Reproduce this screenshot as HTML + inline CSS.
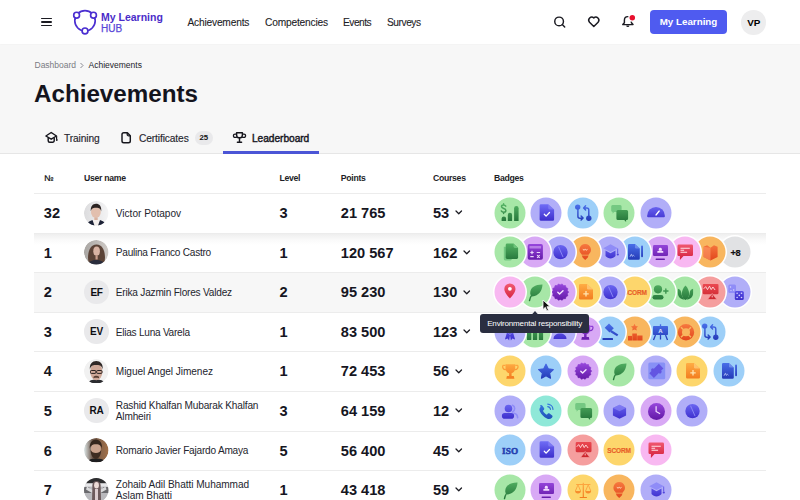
<!DOCTYPE html>
<html><head><meta charset="utf-8">
<style>
*{margin:0;padding:0;box-sizing:border-box}
html,body{width:800px;height:500px;overflow:hidden;background:#fff;font-family:"Liberation Sans",sans-serif;color:#1a1b25}
.a{position:absolute;white-space:nowrap}
#hdr{position:absolute;left:0;top:0;width:800px;height:44px;background:#fff;box-shadow:0 0.5px 1.5px rgba(0,0,0,0.04);z-index:5}
#gray{position:absolute;left:0;top:44px;width:800px;height:110px;background:#f7f7f7;border-bottom:1px solid #e6e6e6}
.nav{font-size:10.2px;top:17.1px;-webkit-text-stroke:0.1px #1d1d26;letter-spacing:-0.18px;color:#1d1d26}
.th{font-size:8.7px;font-weight:bold;top:172.5px;color:#1d1d26;letter-spacing:-0.3px}
.num{font-size:14.6px;font-weight:bold;color:#16161f}
.nm{font-size:10.1px;color:#24252e;line-height:12px}
.av{position:absolute;width:24.5px;height:24.5px;border-radius:50%;background:#e9e9eb;font-size:10px;font-weight:bold;text-align:center;line-height:26.9px;color:#0d0d12;letter-spacing:-0.35px;padding-left:0.35px}
.ln{position:absolute;left:34px;width:732px;height:1px;background:#ececec}
svg.b{position:absolute;overflow:visible}
</style></head><body>
<svg width="0" height="0" style="position:absolute"><defs><linearGradient id="gG" gradientUnits="userSpaceOnUse" x1="0" y1="7" x2="0" y2="24"><stop offset="0" stop-color="#52b062"/><stop offset="1" stop-color="#25763a"/></linearGradient><linearGradient id="gL" gradientUnits="userSpaceOnUse" x1="0" y1="7" x2="0" y2="24"><stop offset="0" stop-color="#6f6cf5"/><stop offset="1" stop-color="#3b2ccb"/></linearGradient><linearGradient id="gB" gradientUnits="userSpaceOnUse" x1="0" y1="7" x2="0" y2="24"><stop offset="0" stop-color="#4a70ea"/><stop offset="1" stop-color="#2238b5"/></linearGradient><linearGradient id="gP" gradientUnits="userSpaceOnUse" x1="0" y1="7" x2="0" y2="24"><stop offset="0" stop-color="#9848de"/><stop offset="1" stop-color="#6419a8"/></linearGradient><linearGradient id="gO" gradientUnits="userSpaceOnUse" x1="0" y1="7" x2="0" y2="24"><stop offset="0" stop-color="#f77a40"/><stop offset="1" stop-color="#e2461c"/></linearGradient><linearGradient id="gY" gradientUnits="userSpaceOnUse" x1="0" y1="7" x2="0" y2="24"><stop offset="0" stop-color="#ffae45"/><stop offset="1" stop-color="#f27a1e"/></linearGradient><linearGradient id="gK" gradientUnits="userSpaceOnUse" x1="0" y1="7" x2="0" y2="24"><stop offset="0" stop-color="#f25a72"/><stop offset="1" stop-color="#d21f3c"/></linearGradient><linearGradient id="gR" gradientUnits="userSpaceOnUse" x1="0" y1="7" x2="0" y2="24"><stop offset="0" stop-color="#ec4a52"/><stop offset="1" stop-color="#c8222a"/></linearGradient><linearGradient id="gT" gradientUnits="userSpaceOnUse" x1="0" y1="7" x2="0" y2="24"><stop offset="0" stop-color="#3a7ee5"/><stop offset="1" stop-color="#1f4fb5"/></linearGradient><linearGradient id="gX" gradientUnits="userSpaceOnUse" x1="0" y1="7" x2="0" y2="24"><stop offset="0" stop-color="#111"/><stop offset="1" stop-color="#111"/></linearGradient></defs></svg>
<div id="hdr">
  <div class="a" style="left:41px;top:17.85px;width:11px;height:1.3px;background:#1b1b22;border-radius:1px"></div>
  <div class="a" style="left:41px;top:21.35px;width:11px;height:1.3px;background:#1b1b22;border-radius:1px"></div>
  <div class="a" style="left:41px;top:25.1px;width:11px;height:1.3px;background:#1b1b22;border-radius:1px"></div>
  <svg class="a" style="left:70px;top:7px" width="30" height="30" viewBox="70 7 30 30">
    <circle cx="85" cy="20.8" r="10.2" fill="none" stroke="#4b2fd1" stroke-width="1.65"/>
    <circle cx="76.6" cy="15.2" r="2.9" fill="#fff" stroke="#4b2fd1" stroke-width="1.65"/>
    <circle cx="93.5" cy="15.2" r="2.9" fill="#fff" stroke="#4b2fd1" stroke-width="1.65"/>
    <circle cx="85" cy="30.9" r="2.9" fill="#fff" stroke="#4b2fd1" stroke-width="1.65"/>
  </svg>
  <div class="a" style="left:101px;top:10.5px;font-size:10.5px;font-weight:bold;color:#4a2cc9">My Learning</div>
  <div class="a" style="left:101px;top:22.5px;font-size:10px;color:#5a48d8;-webkit-text-stroke:0.25px #5a48d8">HUB</div>
  <div class="a nav" style="left:187.4px">Achievements</div>
  <div class="a nav" style="left:265px">Competencies</div>
  <div class="a nav" style="left:343px;letter-spacing:-0.5px">Events</div>
  <div class="a nav" style="left:387px;letter-spacing:-0.45px">Surveys</div>
  <svg class="a" style="left:550px;top:13px" width="90" height="18" viewBox="550 13 90 18">
    <circle cx="559.1" cy="21.45" r="4.35" fill="none" stroke="#1b1b22" stroke-width="1.45"/>
    <path d="M562.3 24.6l2.4 2.5" stroke="#1b1b22" stroke-width="1.45" stroke-linecap="round"/>
    <path d="M593.8 26.5l-4.3-4.3a3.05 3.05 0 0 1 4.3-4.3 3.05 3.05 0 0 1 4.3 4.3z" fill="none" stroke="#1b1b22" stroke-width="1.5" stroke-linejoin="round"/>
    <path d="M627.8 16.6c-2.1 0-3.4 1.5-3.4 3.6v2.6l-1.6 1.8h10.2l-1.6-1.8v-2.6c0-2.1-1.4-3.6-3.6-3.6z" fill="none" stroke="#1b1b22" stroke-width="1.45" stroke-linejoin="round"/><path d="M626.2 25.4a1.6 1.6 0 0 0 3.2 0z" fill="#1b1b22"/><circle cx="632.3" cy="17.7" r="4.1" fill="#fff"/><circle cx="632.3" cy="17.7" r="2.75" fill="#e8102e"/>
  </svg>
  <div class="a" style="left:650px;top:10px;width:77px;height:24px;background:#4f5bf0;border-radius:4px;color:#fff;font-size:9.8px;font-weight:bold;text-align:center;line-height:24.6px">My Learning</div>
  <div class="av" style="left:741px;top:10px;background:#ededee;color:#000;font-size:9.9px;line-height:26.3px;padding-left:0.8px;letter-spacing:-0.2px">VP</div>
</div>
<div id="gray">
  <div class="a" style="left:34.5px;top:16.2px;font-size:8.5px;color:#7b7b83">Dashboard</div>
  <svg class="a" style="left:79px;top:18px" width="6" height="7" viewBox="0 0 6 7"><path d="M1.5 1l2.5 2.5-2.5 2.5" fill="none" stroke="#8a8a92" stroke-width="1"/></svg>
  <div class="a" style="left:88.5px;top:16.2px;font-size:8.5px;color:#24242c">Achievements</div>
  <div class="a" style="left:34px;top:35.6px;font-size:24.2px;font-weight:bold;color:#14141d">Achievements</div>
  <div class="a" style="left:63.9px;top:88.5px;font-size:10.2px;color:#26262e;letter-spacing:-0.1px;-webkit-text-stroke:0.15px #26262e">Training</div>
  <div class="a" style="left:138.9px;top:88.5px;font-size:10.2px;color:#26262e;letter-spacing:-0.1px;-webkit-text-stroke:0.15px #26262e">Certificates</div>
  <div class="a" style="left:195px;top:86.8px;width:17.5px;height:14px;border-radius:7px;background:#e9e9eb;font-size:7.8px;font-weight:bold;text-align:center;line-height:14.6px;color:#111">25</div>
  <div class="a" style="left:252px;top:88.5px;font-size:10.2px;color:#16161e;letter-spacing:-0.05px;-webkit-text-stroke:0.4px #16161e">Leaderboard</div>
  <div class="a" style="left:223px;top:107px;width:96px;height:2.5px;background:#4b55d6"></div>
  <svg class="a" style="left:40px;top:80px" width="220" height="20" viewBox="40 124 220 20">
    <path d="M51.2 132.5l5.3 3.5-5.3 3.2-5.3-3.2z" fill="none" stroke="#16161d" stroke-width="1.45" stroke-linejoin="round"/>
    <path d="M48.2 137.8v3a1.5 1.5 0 0 0 1.5 1.5h3a1.5 1.5 0 0 0 1.5-1.5v-3" fill="none" stroke="#16161d" stroke-width="1.45" stroke-linejoin="round"/>
    <path d="M56.6 136.2v3.2" stroke="#16161d" stroke-width="1.2"/><circle cx="56.8" cy="140" r="0.9" fill="#16161d"/>
    <path d="M123.8 132.8h3.6l2.9 2.9v5.2a1.8 1.8 0 0 1-1.8 1.8h-4.7a1.8 1.8 0 0 1-1.8-1.8v-6.3a1.8 1.8 0 0 1 1.8-1.8z" fill="none" stroke="#16161d" stroke-width="1.45" stroke-linejoin="round"/>
    <path d="M127.2 133v1.4a1.4 1.4 0 0 0 1.4 1.4h1.5" fill="none" stroke="#16161d" stroke-width="1.3"/>
    <path d="M236.6 132.7h5.8v2.2a2.9 2.9 0 0 1-5.8 0z" fill="none" stroke="#16161d" stroke-width="1.45" stroke-linejoin="round"/>
    <path d="M236.6 134.2h-1.6a1.6 1.6 0 0 0 0 3.2h1.9M242.4 134.2h1.6a1.6 1.6 0 0 1 0 3.2h-1.9" fill="none" stroke="#16161d" stroke-width="1.3"/>
    <path d="M239.5 138v4.2M237.4 142.3h4.2" stroke="#16161d" stroke-width="1.45" stroke-linecap="round"/>
  </svg>
</div>
<div class="a th" style="left:44px">№</div>
<div class="a th" style="left:84px">User name</div>
<div class="a th" style="left:279.5px">Level</div>
<div class="a th" style="left:340.8px">Points</div>
<div class="a th" style="left:433px">Courses</div>
<div class="a th" style="left:494px">Badges</div>

<div class="a" style="left:34px;top:233px;width:732px;height:12px;background:linear-gradient(#ededed,#fafafa 60%,#fff)"></div>
<div class="a" style="left:34px;top:272px;width:732px;height:40px;background:#f7f7f7"></div>
<div class="ln" style="top:193px"></div>
<div class="ln" style="top:233px"></div>
<div class="ln" style="top:272px"></div>
<div class="ln" style="top:311.5px"></div>
<div class="ln" style="top:351px"></div>
<div class="ln" style="top:391px"></div>
<div class="ln" style="top:430.5px"></div>
<div class="ln" style="top:470px"></div>
<div class="a num" style="left:43.8px;top:205.19px">32</div>
<div class="a num" style="left:279.5px;top:205.19px">3</div>
<div class="a num" style="left:340.8px;top:205.19px">21 765</div>
<div class="a num" style="left:433px;top:205.19px">53</div>
<svg class="b" style="left:455.25px;top:210.38px" width="8" height="5" viewBox="0 0 8 5"><path d="M1 1l2.75 2.75 2.75-2.75" fill="none" stroke="#1b1b22" stroke-width="1.25" stroke-linecap="round" stroke-linejoin="round"/></svg>
<svg class="b" style="left:84px;top:200.53px" width="24.5" height="24.5" viewBox="0 0 24.5 24.5"><clipPath id="c0"><circle cx="12.25" cy="12.25" r="12.25"/></clipPath><g clip-path="url(#c0)"><defs><linearGradient id="gv" x1="0" x2="1"><stop offset="0" stop-color="#dcdcde"/><stop offset="1" stop-color="#f4f4f5"/></linearGradient></defs><circle cx="12.25" cy="12.25" r="12.25" fill="url(#gv)"/><path d="M7.5 19.5c1.5-.8 3-1.2 4.75-1.2s3.5.4 5 1.2l3 6H4.5z" fill="#f3eeec"/><path d="M3 23.5c1-2.5 3-3.8 5.5-4.5l2.3 6.5H3zM21.5 23.5c-1-2.5-3-3.8-5.5-4.5l-2.3 6.5h7.8z" fill="#1c2236"/><ellipse cx="11.9" cy="11" rx="4.9" ry="6" fill="#e2bfae"/><path d="M10.3 16.5h3.4v2.5h-3.4z" fill="#d9b2a0"/><path d="M6.8 10.5c-.5-5 2-7.7 5.2-7.7s5.8 2.3 5.2 7.7c-.4-2.3-1.6-3.8-5.2-3.8s-4.8 1.5-5.2 3.8z" fill="#2b2322"/></g></svg>
<div class="a nm" style="left:115.8px;top:207.78px;letter-spacing:-0.01px">Victor Potapov</div>
<svg class="b" style="left:491.50px;top:194.78px;z-index:100" width="36" height="36" viewBox="-2.5 -2.5 36 36"><circle cx="15.5" cy="15.5" r="17" fill="#fff"/><circle cx="15.5" cy="15.5" r="15.5" fill="#a7e7a7"/><path d="M11.3 8.7c-.5-.9-1.4-1.3-2.3-1.3-1.2 0-2 .7-2 1.7 0 2.3 4.4 1.4 4.4 3.8 0 1-.9 1.8-2.2 1.8-1 0-1.9-.5-2.4-1.3M9.1 6.2v1.2M9.1 14.7v1.2" fill="none" stroke="url(#gG)" stroke-width="1.45" stroke-linecap="round"/><path d="M7.1 21.3a2.25 2.25 0 0 1 4.5 0v2.1H7.1z" fill="url(#gG)"/><path d="M13.3 17.5a2.15 2.15 0 0 1 4.3 0v5.9h-4.3z" fill="url(#gG)"/><path d="M19.6 10.7a2.25 2.25 0 0 1 4.5 0v12.7h-4.5z" fill="url(#gG)"/></svg><svg class="b" style="left:528.00px;top:194.78px;z-index:99" width="36" height="36" viewBox="-2.5 -2.5 36 36"><circle cx="15.5" cy="15.5" r="17" fill="#fff"/><circle cx="15.5" cy="15.5" r="15.5" fill="#b1aef8"/><path d="M10.5 6.8h7.2l5.9 5.3v9.9a1.3 1.3 0 0 1-1.3 1.3H10.5A1.4 1.4 0 0 1 9.1 22V8.2a1.4 1.4 0 0 1 1.4-1.4z" fill="url(#gL)"/><path d="M17.7 6.8l5.9 5.3h-4.4a1.5 1.5 0 0 1-1.5-1.5z" fill="#8f8cf7" opacity="0.55"/><path d="M13.8 16.8l1.8 1.8 3.4-3.6" fill="none" stroke="#fff" stroke-width="1.3" stroke-linecap="round" stroke-linejoin="round"/></svg><svg class="b" style="left:564.50px;top:194.78px;z-index:98" width="36" height="36" viewBox="-2.5 -2.5 36 36"><circle cx="15.5" cy="15.5" r="17" fill="#fff"/><circle cx="15.5" cy="15.5" r="15.5" fill="#9dcff8"/><circle cx="10.2" cy="9.6" r="2.7" fill="url(#gB)"/><circle cx="21.3" cy="20.8" r="2.7" fill="url(#gB)"/><path d="M10.4 11.5v7.2a2 2 0 0 0 2 2h2.6M13.6 18.6l2 2-2 2" fill="none" stroke="url(#gB)" stroke-width="1.45" stroke-linecap="round" stroke-linejoin="round"/><path d="M21.3 18.9v-6.5a2 2 0 0 0-2-2h-2.6M18.1 8.3l-2 2.1 2 2" fill="none" stroke="url(#gB)" stroke-width="1.45" stroke-linecap="round" stroke-linejoin="round"/></svg><svg class="b" style="left:601.00px;top:194.78px;z-index:97" width="36" height="36" viewBox="-2.5 -2.5 36 36"><circle cx="15.5" cy="15.5" r="17" fill="#fff"/><circle cx="15.5" cy="15.5" r="15.5" fill="#a7e7a7"/><path d="M9 7.5h7.6a1.5 1.5 0 0 1 1.5 1.5v4a1.5 1.5 0 0 1-1.5 1.5h-6l-1.5 1.8v-1.8a1.5 1.5 0 0 1-1.4-1.5V9A1.5 1.5 0 0 1 9 7.5z" fill="#74c882"/><path d="M14.4 12.6h8.7a1.5 1.5 0 0 1 1.5 1.5v6.9a1.5 1.5 0 0 1-1.5 1.5h-.5v1.9l-1.9-1.9h-6.3a1.5 1.5 0 0 1-1.5-1.5v-6.9a1.5 1.5 0 0 1 1.5-1.5z" fill="url(#gG)"/></svg><svg class="b" style="left:637.50px;top:194.78px;z-index:96" width="36" height="36" viewBox="-2.5 -2.5 36 36"><circle cx="15.5" cy="15.5" r="17" fill="#fff"/><circle cx="15.5" cy="15.5" r="15.5" fill="#b1aef8"/><path d="M6.6 18.4a8.9 8.9 0 0 1 17.8 0v.4a1 1 0 0 1-1 1H7.6a1 1 0 0 1-1-1z" fill="url(#gL)"/><path d="M15.6 17.4l3-3.8" stroke="#fff" stroke-width="1.5" stroke-linecap="round"/></svg>
<div class="a num" style="left:43.8px;top:244.76px">1</div>
<div class="a num" style="left:279.5px;top:244.76px">1</div>
<div class="a num" style="left:340.8px;top:244.76px">120 567</div>
<div class="a num" style="left:433px;top:244.76px">162</div>
<svg class="b" style="left:463.00px;top:249.96px" width="8" height="5" viewBox="0 0 8 5"><path d="M1 1l2.75 2.75 2.75-2.75" fill="none" stroke="#1b1b22" stroke-width="1.25" stroke-linecap="round" stroke-linejoin="round"/></svg>
<svg class="b" style="left:84px;top:240.11px" width="24.5" height="24.5" viewBox="0 0 24.5 24.5"><clipPath id="c1"><circle cx="12.25" cy="12.25" r="12.25"/></clipPath><g clip-path="url(#c1)"><defs><linearGradient id="gp" x1="0" x2="1"><stop offset="0" stop-color="#a9a6a3"/><stop offset="1" stop-color="#cfcac6"/></linearGradient></defs><circle cx="12.25" cy="12.25" r="12.25" fill="url(#gp)"/><path d="M4.5 22c-1.5-7 .5-17.5 8-17.5s9.5 10.5 8 17.5z" fill="#5b4337"/><path d="M3 25c1.5-3.5 5-5 9.25-5s7.75 1.5 9.25 5z" fill="#2a2d3c"/><ellipse cx="12.6" cy="11.2" rx="3.3" ry="4.6" fill="#d9b3a3"/><path d="M11.5 15.5h2.2v4h-2.2z" fill="#c99d8c"/></g></svg>
<div class="a nm" style="left:115.8px;top:247.36px;letter-spacing:-0.25px">Paulina Franco Castro</div>
<svg class="b" style="left:491.50px;top:234.36px;z-index:100" width="36" height="36" viewBox="-2.5 -2.5 36 36"><circle cx="15.5" cy="15.5" r="17" fill="#fff"/><circle cx="15.5" cy="15.5" r="15.5" fill="#a7e7a7"/><path d="M9.3 10.2h8v12.4a1.4 1.4 0 0 1-1.4 1.4H10.7a1.4 1.4 0 0 1-1.4-1.4z" fill="#74c882"/><path d="M12.6 7h6.4l4.6 4.4v9.6a1.4 1.4 0 0 1-1.4 1.4h-9.6a1.4 1.4 0 0 1-1.4-1.4V8.4A1.4 1.4 0 0 1 12.6 7z" fill="url(#gG)"/><path d="M19 7l4.6 4.4h-3.2a1.4 1.4 0 0 1-1.4-1.4z" fill="#6cc47a"/></svg><svg class="b" style="left:516.50px;top:234.36px;z-index:99" width="36" height="36" viewBox="-2.5 -2.5 36 36"><circle cx="15.5" cy="15.5" r="17" fill="#fff"/><circle cx="15.5" cy="15.5" r="15.5" fill="#d8a9f5"/><rect x="8.2" y="7.6" width="15.2" height="15.6" rx="1.8" fill="url(#gP)"/><rect x="10" y="9.4" width="11.6" height="2.6" rx="0.5" fill="#b77ee6"/><path d="M10.8 16h3.4M12.5 14.3v3.4M17.2 16h3.4M10.8 20.2h3.4M17.6 18.7l2.6 2.6M20.2 18.7l-2.6 2.6" stroke="#ead7fa" stroke-width="1.2"/></svg><svg class="b" style="left:541.50px;top:234.36px;z-index:98" width="36" height="36" viewBox="-2.5 -2.5 36 36"><circle cx="15.5" cy="15.5" r="17" fill="#fff"/><circle cx="15.5" cy="15.5" r="15.5" fill="#b1aef8"/><circle cx="16" cy="15.6" r="7.2" fill="url(#gL)"/><path d="M14.2 10.6l4.2 9.6" stroke="#8f8cf7" stroke-width="0.9" stroke-linecap="round"/></svg><svg class="b" style="left:566.50px;top:234.36px;z-index:97" width="36" height="36" viewBox="-2.5 -2.5 36 36"><circle cx="15.5" cy="15.5" r="17" fill="#fff"/><circle cx="15.5" cy="15.5" r="15.5" fill="#f8b65f"/><path d="M15.7 7.4a5.8 5.8 0 0 1 3.6 10.3v.6h-7.2v-.6A5.8 5.8 0 0 1 15.7 7.4z" fill="url(#gO)"/><path d="M12.3 19h6.8l-1 2.3-2.4 2.3-2.4-2.3z" fill="url(#gO)"/><path d="M13.4 12.4l1.1 1.5 1.2-1.5 1.2 1.5 1.1-1.5" fill="none" stroke="#ffd3b0" stroke-width="0.9"/></svg><svg class="b" style="left:591.50px;top:234.36px;z-index:96" width="36" height="36" viewBox="-2.5 -2.5 36 36"><circle cx="15.5" cy="15.5" r="17" fill="#fff"/><circle cx="15.5" cy="15.5" r="15.5" fill="#b1aef8"/><path d="M16 7.8l7.3 3.9-7.3 3.9-7.3-3.9z" fill="#8f8cf7"/><path d="M11 14v5.5c1.4 1.6 3.1 2.4 5 2.4s3.6-.8 5-2.4V14l-5 2.7z" fill="url(#gL)"/><path d="M23.2 12v5" stroke="url(#gL)" stroke-width="0.9"/><circle cx="23.3" cy="18" r="1.1" fill="url(#gL)"/></svg><svg class="b" style="left:616.50px;top:234.36px;z-index:95" width="36" height="36" viewBox="-2.5 -2.5 36 36"><circle cx="15.5" cy="15.5" r="17" fill="#fff"/><circle cx="15.5" cy="15.5" r="15.5" fill="#9dcff8"/><path d="M9.8 7.4h5.7l4.8 4.6v9.9a1.3 1.3 0 0 1-1.3 1.3H9.8a1.3 1.3 0 0 1-1.3-1.3V8.7a1.3 1.3 0 0 1 1.3-1.3z" fill="url(#gB)"/><path d="M15.5 7.4l4.8 4.6h-3.5a1.3 1.3 0 0 1-1.3-1.3z" fill="#8aa6f5" opacity="0.6"/><path d="M10.6 20.2c.6-1.6 1-2.4 1.4-2.4s.2 2 .7 2 .8-1 1.2-1 .5.9 1 .9" fill="none" stroke="#d0dcff" stroke-width="0.8"/><rect x="21.6" y="9" width="1.9" height="11.7" rx="0.9" fill="url(#gB)"/></svg><svg class="b" style="left:641.50px;top:234.36px;z-index:94" width="36" height="36" viewBox="-2.5 -2.5 36 36"><circle cx="15.5" cy="15.5" r="17" fill="#fff"/><circle cx="15.5" cy="15.5" r="15.5" fill="#d8a9f5"/><rect x="8.5" y="8.6" width="15" height="11" rx="1.3" fill="url(#gP)"/><rect x="11" y="22" width="9.5" height="1.5" rx="0.75" fill="url(#gP)"/><path d="M14.3 14.3v-1.5a1.5 1.5 0 0 1 3 0v1.5z" fill="#f3dcff"/><rect x="12.8" y="14.4" width="6" height="1.9" rx="0.5" fill="#f3dcff"/></svg><svg class="b" style="left:666.50px;top:234.36px;z-index:93" width="36" height="36" viewBox="-2.5 -2.5 36 36"><circle cx="15.5" cy="15.5" r="17" fill="#fff"/><circle cx="15.5" cy="15.5" r="15.5" fill="#f8b8f1"/><path d="M9.3 8.1h12.9a1.3 1.3 0 0 1 1.3 1.3v8.9a1.3 1.3 0 0 1-1.3 1.3H14l-3.6 3.9v-3.9h-1.1A1.3 1.3 0 0 1 8 18.3V9.4a1.3 1.3 0 0 1 1.3-1.3z" fill="url(#gK)"/><path d="M11 11.7h9.3M11 13.7h3.6M11 15.7h6.6" stroke="#ffe0e6" stroke-width="1.1"/></svg><svg class="b" style="left:691.50px;top:234.36px;z-index:92" width="36" height="36" viewBox="-2.5 -2.5 36 36"><circle cx="15.5" cy="15.5" r="17" fill="#fff"/><circle cx="15.5" cy="15.5" r="15.5" fill="#f8b65f"/><path d="M9 10.2l3.6-1.4 3.4 2.4 3.5-2.4 3.6 1.4v10.3l-7.1 3.4-7-3.4z" fill="url(#gO)"/><path d="M16 11.2v12.7l-7-3.4V10.2z" fill="#ffa070" opacity="0.55"/></svg><svg class="b" style="left:716.50px;top:234.36px;z-index:91" width="36" height="36" viewBox="-2.5 -2.5 36 36"><circle cx="15.5" cy="15.5" r="17" fill="#fff"/><circle cx="15.5" cy="15.5" r="15.5" fill="#e1e2e4"/><text x="15.9" y="19.2" text-anchor="middle" font-family="Liberation Sans" font-weight="bold" font-size="9.3" fill="#111" stroke="#111" stroke-width="0.2" letter-spacing="-0.3">+8</text></svg>
<div class="a num" style="left:43.8px;top:284.32px">2</div>
<div class="a num" style="left:279.5px;top:284.32px">2</div>
<div class="a num" style="left:340.8px;top:284.32px">95 230</div>
<div class="a num" style="left:433px;top:284.32px">130</div>
<svg class="b" style="left:463.00px;top:289.53px" width="8" height="5" viewBox="0 0 8 5"><path d="M1 1l2.75 2.75 2.75-2.75" fill="none" stroke="#1b1b22" stroke-width="1.25" stroke-linecap="round" stroke-linejoin="round"/></svg>
<div class="av" style="left:84px;top:279.68px">EF</div>
<div class="a nm" style="left:115.8px;top:286.93px;letter-spacing:-0.21px">Erika Jazmin Flores Valdez</div>
<svg class="b" style="left:491.50px;top:273.93px;z-index:100" width="36" height="36" viewBox="-2.5 -2.5 36 36"><circle cx="15.5" cy="15.5" r="17" fill="#fff"/><circle cx="15.5" cy="15.5" r="15.5" fill="#f8b8f1"/><path d="M15.4 6.9a5.6 5.6 0 0 1 5.6 5.6c0 3.9-5.6 9.5-5.6 9.5S9.8 16.4 9.8 12.5a5.6 5.6 0 0 1 5.6-5.6z" fill="url(#gK)"/><circle cx="15.4" cy="12.3" r="1.9" fill="#fff"/></svg><svg class="b" style="left:516.50px;top:273.93px;z-index:99" width="36" height="36" viewBox="-2.5 -2.5 36 36"><circle cx="15.5" cy="15.5" r="17" fill="#fff"/><circle cx="15.5" cy="15.5" r="15.5" fill="#a7e7a7"/><path d="M23 8.1c-6.8-.2-12.3 2.8-12.3 8.3 0 1.8.8 3 2.2 3.6 6.2-.6 9.8-5.5 10.1-11.9z" fill="url(#gG)"/><path d="M10 24.1c.7-4.3 3.7-8.2 8.7-11.2" fill="none" stroke="url(#gG)" stroke-width="1.4" stroke-linecap="round"/></svg><svg class="b" style="left:541.50px;top:273.93px;z-index:98" width="36" height="36" viewBox="-2.5 -2.5 36 36"><circle cx="15.5" cy="15.5" r="17" fill="#fff"/><circle cx="15.5" cy="15.5" r="15.5" fill="#d8a9f5"/><polygon points="24.20,15.60 22.92,17.22 23.37,19.24 21.51,20.15 21.04,22.17 18.97,22.18 17.67,23.79 15.80,22.90 13.93,23.79 12.63,22.18 10.56,22.17 10.09,20.15 8.23,19.24 8.68,17.22 7.40,15.60 8.68,13.98 8.23,11.96 10.09,11.05 10.56,9.03 12.63,9.02 13.93,7.41 15.80,8.30 17.67,7.41 18.97,9.02 21.04,9.03 21.51,11.05 23.37,11.96 22.92,13.98" fill="url(#gP)" stroke="url(#gP)" stroke-width="0.6" stroke-linejoin="round"/><path d="M13.3 15.8l1.8 1.8 3.4-3.4" fill="none" stroke="#f7e6ff" stroke-width="1.4" stroke-linecap="round" stroke-linejoin="round"/></svg><svg class="b" style="left:566.50px;top:273.93px;z-index:97" width="36" height="36" viewBox="-2.5 -2.5 36 36"><circle cx="15.5" cy="15.5" r="17" fill="#fff"/><circle cx="15.5" cy="15.5" r="15.5" fill="#fdd66c"/><path d="M10.8 7.6h6.7l6 5.4v8.8a1.3 1.3 0 0 1-1.3 1.3H10.8a1.3 1.3 0 0 1-1.3-1.3V8.9a1.3 1.3 0 0 1 1.3-1.3z" fill="url(#gY)"/><path d="M17.5 7.6l6 5.4h-4.7a1.3 1.3 0 0 1-1.3-1.3z" fill="#ffd080" opacity="0.7"/><path d="M16.5 14.6v5.4M13.8 17.3h5.4" stroke="#ffe4b0" stroke-width="1.3"/></svg><svg class="b" style="left:591.50px;top:273.93px;z-index:96" width="36" height="36" viewBox="-2.5 -2.5 36 36"><circle cx="15.5" cy="15.5" r="17" fill="#fff"/><circle cx="15.5" cy="15.5" r="15.5" fill="#b1aef8"/><circle cx="16" cy="15.6" r="7.2" fill="url(#gL)"/><path d="M14.2 10.6l4.2 9.6" stroke="#8f8cf7" stroke-width="0.9" stroke-linecap="round"/></svg><svg class="b" style="left:616.50px;top:273.93px;z-index:95" width="36" height="36" viewBox="-2.5 -2.5 36 36"><circle cx="15.5" cy="15.5" r="17" fill="#fff"/><circle cx="15.5" cy="15.5" r="15.5" fill="#fdd66c"/><text x="15.5" y="18.2" text-anchor="middle" font-family="Liberation Sans" font-weight="bold" font-size="6.5" fill="#e85e28" stroke="#e85e28" stroke-width="0.15" letter-spacing="-0.15">SCORM</text></svg><svg class="b" style="left:641.50px;top:273.93px;z-index:94" width="36" height="36" viewBox="-2.5 -2.5 36 36"><circle cx="15.5" cy="15.5" r="17" fill="#fff"/><circle cx="15.5" cy="15.5" r="15.5" fill="#a7e7a7"/><circle cx="13.5" cy="12.8" r="4.1" fill="url(#gG)"/><rect x="8" y="18.6" width="11" height="4.5" rx="2.25" fill="url(#gG)"/><path d="M19.2 14.5h4.3M21.35 12.35v4.3" stroke="url(#gG)" stroke-width="1.4" stroke-linecap="round"/></svg><svg class="b" style="left:666.50px;top:273.93px;z-index:93" width="36" height="36" viewBox="-2.5 -2.5 36 36"><circle cx="15.5" cy="15.5" r="17" fill="#fff"/><circle cx="15.5" cy="15.5" r="15.5" fill="#a7e7a7"/><path d="M16 9.1c2.4 2.3 3.6 5.3 3.6 8.3s-1.3 4.6-3.6 6.2c-2.3-1.6-3.6-3.2-3.6-6.2s1.2-6 3.6-8.3z" fill="url(#gG)"/><path d="M8.4 12.3c1.8.4 3.3 1.8 3.5 4.3.2 2.8 1.6 4.8 3 6.3-3.8.4-6.6-2.5-6.5-6.3z" fill="url(#gG)"/><path d="M23.6 12.3c-1.8.4-3.3 1.8-3.5 4.3-.2 2.8-1.6 4.8-3 6.3 3.8.4 6.6-2.5 6.5-6.3z" fill="url(#gG)"/></svg><svg class="b" style="left:691.50px;top:273.93px;z-index:92" width="36" height="36" viewBox="-2.5 -2.5 36 36"><circle cx="15.5" cy="15.5" r="17" fill="#fff"/><circle cx="15.5" cy="15.5" r="15.5" fill="#f59e9e"/><rect x="8.2" y="7.5" width="15.8" height="10.2" rx="1.1" fill="url(#gR)"/><path d="M9.2 12.3l2-2.2 1.8 3 2-3.4 1.7 3.4 1.7-2.6 2.2 3" fill="none" stroke="#ffe0e0" stroke-width="0.9"/><path d="M17.7 16.9l4.7 6.1h-9.4z" fill="url(#gR)" stroke="#f59e9e" stroke-width="0.7" stroke-linejoin="round"/><path d="M17.7 19v1.9" stroke="#ffd0d0" stroke-width="0.9"/></svg><svg class="b" style="left:716.50px;top:273.93px;z-index:91" width="36" height="36" viewBox="-2.5 -2.5 36 36"><circle cx="15.5" cy="15.5" r="17" fill="#fff"/><circle cx="15.5" cy="15.5" r="15.5" fill="#b1aef8"/><rect x="8.8" y="7.9" width="7.7" height="8.6" rx="1.5" fill="#8f8cf7"/><rect x="15.3" y="14.4" width="9" height="9" rx="1.5" fill="url(#gL)"/><circle cx="11" cy="10.5" r=".75" fill="#d9d5ff"/><circle cx="14.2" cy="13.6" r=".75" fill="#d9d5ff"/><circle cx="11.5" cy="14" r=".6" fill="#d9d5ff"/><circle cx="17.6" cy="16.8" r=".8" fill="#d9d5ff"/><circle cx="22" cy="16.8" r=".8" fill="#d9d5ff"/><circle cx="19.8" cy="18.9" r=".8" fill="#d9d5ff"/><circle cx="17.6" cy="21" r=".8" fill="#d9d5ff"/><circle cx="22" cy="21" r=".8" fill="#d9d5ff"/></svg>
<div class="a num" style="left:43.8px;top:323.89px">3</div>
<div class="a num" style="left:279.5px;top:323.89px">1</div>
<div class="a num" style="left:340.8px;top:323.89px">83 500</div>
<div class="a num" style="left:433px;top:323.89px">123</div>
<svg class="b" style="left:463.00px;top:329.10px" width="8" height="5" viewBox="0 0 8 5"><path d="M1 1l2.75 2.75 2.75-2.75" fill="none" stroke="#1b1b22" stroke-width="1.25" stroke-linecap="round" stroke-linejoin="round"/></svg>
<div class="av" style="left:84px;top:319.25px">EV</div>
<div class="a nm" style="left:115.8px;top:326.50px;letter-spacing:-0.26px">Elias Luna Varela</div>
<svg class="b" style="left:491.50px;top:313.50px;z-index:100" width="36" height="36" viewBox="-2.5 -2.5 36 36"><circle cx="15.5" cy="15.5" r="17" fill="#fff"/><circle cx="15.5" cy="15.5" r="15.5" fill="#b1aef8"/><circle cx="15.5" cy="12" r="5.3" fill="url(#gL)"/><path d="M12.4 16.3l-2 6.6 2.8-.8 1.4 1.9 1-5.8zM18.6 16.3l2 6.6-2.8-.8-1.4 1.9-1-5.8z" fill="url(#gL)"/></svg><svg class="b" style="left:516.50px;top:313.50px;z-index:99" width="36" height="36" viewBox="-2.5 -2.5 36 36"><circle cx="15.5" cy="15.5" r="17" fill="#fff"/><circle cx="15.5" cy="15.5" r="15.5" fill="#a7e7a7"/><rect x="7.5" y="14.5" width="4.3" height="9" rx="0.6" fill="url(#gG)"/><rect x="13.4" y="10.5" width="4.3" height="13" rx="0.6" fill="url(#gG)"/><rect x="19.3" y="12.5" width="4.3" height="11" rx="0.6" fill="url(#gG)"/></svg><svg class="b" style="left:541.50px;top:313.50px;z-index:98" width="36" height="36" viewBox="-2.5 -2.5 36 36"><circle cx="15.5" cy="15.5" r="17" fill="#fff"/><circle cx="15.5" cy="15.5" r="15.5" fill="#b1aef8"/><circle cx="15.5" cy="11.5" r="3.8" fill="url(#gL)"/><path d="M9 22.5c0-3.8 2.9-5.6 6.5-5.6s6.5 1.8 6.5 5.6z" fill="url(#gL)"/></svg><svg class="b" style="left:566.50px;top:313.50px;z-index:97" width="36" height="36" viewBox="-2.5 -2.5 36 36"><circle cx="15.5" cy="15.5" r="17" fill="#fff"/><circle cx="15.5" cy="15.5" r="15.5" fill="#d8a9f5"/><path d="M11 8.7h9.7v4.3a4.85 4.85 0 0 1-9.7 0z" fill="url(#gP)"/><path d="M11 9.8H8.6a2.8 2.8 0 0 0 2.8 4.2M20.7 9.8h2.4a2.8 2.8 0 0 1-2.8 4.2" fill="none" stroke="url(#gP)" stroke-width="1.3"/><path d="M14.6 17.5h2.5v3h-2.5z" fill="url(#gP)"/><path d="M12.4 20.5h6.9l.6 2.7h-8.1z" fill="url(#gP)"/></svg><svg class="b" style="left:591.50px;top:313.50px;z-index:96" width="36" height="36" viewBox="-2.5 -2.5 36 36"><circle cx="15.5" cy="15.5" r="17" fill="#fff"/><circle cx="15.5" cy="15.5" r="15.5" fill="#9dcff8"/><path d="M14.5 7l4.8 4.8-4.3 4.3-4.8-4.8z" fill="url(#gB)"/><path d="M16.8 13.6l7 4.3-1.2 1.8-7-4.3z" fill="url(#gB)"/><rect x="8" y="21.5" width="10.5" height="2" rx="0.5" fill="url(#gB)"/></svg><svg class="b" style="left:616.50px;top:313.50px;z-index:95" width="36" height="36" viewBox="-2.5 -2.5 36 36"><circle cx="15.5" cy="15.5" r="17" fill="#fff"/><circle cx="15.5" cy="15.5" r="15.5" fill="#f8b65f"/><path d="M15 7.3l1.1 2.3 2.5.3-1.8 1.7.5 2.5-2.3-1.2-2.3 1.2.5-2.5-1.8-1.7 2.5-.3z" fill="url(#gO)"/><rect x="12.8" y="17" width="4.6" height="7" fill="url(#gO)"/><rect x="8.5" y="19.4" width="4" height="4.6" fill="url(#gO)"/><rect x="17.7" y="19" width="5.3" height="5" fill="url(#gO)"/></svg><svg class="b" style="left:641.50px;top:313.50px;z-index:94" width="36" height="36" viewBox="-2.5 -2.5 36 36"><circle cx="15.5" cy="15.5" r="17" fill="#fff"/><circle cx="15.5" cy="15.5" r="15.5" fill="#9dcff8"/><rect x="8.5" y="9.5" width="15" height="9" rx="0.8" fill="url(#gB)"/><text x="16" y="16.6" text-anchor="middle" font-family="Liberation Sans" font-weight="bold" font-size="6" fill="#e0e8ff">A</text><path d="M11 18.5l-2 5M21 18.5l2 5M16 18.5v4.5M16 7.7v1.8" stroke="url(#gB)" stroke-width="1.3"/></svg><svg class="b" style="left:666.50px;top:313.50px;z-index:93" width="36" height="36" viewBox="-2.5 -2.5 36 36"><circle cx="15.5" cy="15.5" r="17" fill="#fff"/><circle cx="15.5" cy="15.5" r="15.5" fill="#f8b65f"/><circle cx="16.5" cy="15.8" r="6.1" fill="none" stroke="url(#gO)" stroke-width="4.2"/><path d="M11.5 10.8l2.5 2.5M21.5 10.8l-2.5 2.5M11.5 20.8l2.5-2.5M21.5 20.8l-2.5-2.5" stroke="#f8b65f" stroke-width="1.5"/></svg><svg class="b" style="left:691.50px;top:313.50px;z-index:92" width="36" height="36" viewBox="-2.5 -2.5 36 36"><circle cx="15.5" cy="15.5" r="17" fill="#fff"/><circle cx="15.5" cy="15.5" r="15.5" fill="#9dcff8"/><circle cx="10.2" cy="9.6" r="2.7" fill="url(#gB)"/><circle cx="21.3" cy="20.8" r="2.7" fill="url(#gB)"/><path d="M10.4 11.5v7.2a2 2 0 0 0 2 2h2.6M13.6 18.6l2 2-2 2" fill="none" stroke="url(#gB)" stroke-width="1.45" stroke-linecap="round" stroke-linejoin="round"/><path d="M21.3 18.9v-6.5a2 2 0 0 0-2-2h-2.6M18.1 8.3l-2 2.1 2 2" fill="none" stroke="url(#gB)" stroke-width="1.45" stroke-linecap="round" stroke-linejoin="round"/></svg>
<div class="a num" style="left:43.8px;top:363.46px">4</div>
<div class="a num" style="left:279.5px;top:363.46px">1</div>
<div class="a num" style="left:340.8px;top:363.46px">72 453</div>
<div class="a num" style="left:433px;top:363.46px">56</div>
<svg class="b" style="left:455.25px;top:368.67px" width="8" height="5" viewBox="0 0 8 5"><path d="M1 1l2.75 2.75 2.75-2.75" fill="none" stroke="#1b1b22" stroke-width="1.25" stroke-linecap="round" stroke-linejoin="round"/></svg>
<svg class="b" style="left:84px;top:358.81px" width="24.5" height="24.5" viewBox="0 0 24.5 24.5"><clipPath id="c4"><circle cx="12.25" cy="12.25" r="12.25"/></clipPath><g clip-path="url(#c4)"><circle cx="12.25" cy="12.25" r="12.25" fill="#f1f1f1"/><path d="M3.5 24c1.5-2.5 4.5-3.5 8.75-3.5s7.25 1 8.75 3.5z" fill="#2c2c30"/><ellipse cx="12.3" cy="12.6" rx="6.1" ry="8.6" fill="#cfa898"/><path d="M5.9 10.5c-.5-5.8 2.4-8.6 6.4-8.6s6.9 2.8 6.4 8.6c-.5-2.3-1.8-3.6-2.6-3.9-1.3-.5-2.6-.6-3.8-.6s-2.5.1-3.8.6c-.8.3-2.1 1.6-2.6 3.9z" fill="#2f2826"/><rect x="6.5" y="11.5" width="5.3" height="2.9" rx="0.8" fill="none" stroke="#2a2220" stroke-width="1"/><rect x="12.7" y="11.5" width="5.3" height="2.9" rx="0.8" fill="none" stroke="#2a2220" stroke-width="1"/><path d="M9.5 17.8c1-.8 1.8-1 2.75-1s1.75.2 2.75 1v1.5c-1-.5-1.8-.6-2.75-.6s-1.75.1-2.75.6z" fill="#5a3f33"/></g></svg>
<div class="a nm" style="left:115.8px;top:366.06px;letter-spacing:-0.05px">Miguel Angel Jimenez</div>
<svg class="b" style="left:491.50px;top:353.06px;z-index:100" width="36" height="36" viewBox="-2.5 -2.5 36 36"><circle cx="15.5" cy="15.5" r="17" fill="#fff"/><circle cx="15.5" cy="15.5" r="15.5" fill="#fdd66c"/><path d="M11 8.7h9.7v4.3a4.85 4.85 0 0 1-9.7 0z" fill="url(#gY)"/><path d="M11 9.8H8.6a2.8 2.8 0 0 0 2.8 4.2M20.7 9.8h2.4a2.8 2.8 0 0 1-2.8 4.2" fill="none" stroke="url(#gY)" stroke-width="1.3"/><path d="M14.6 17.5h2.5v3h-2.5z" fill="url(#gY)"/><path d="M12.4 20.5h6.9l.6 2.7h-8.1z" fill="url(#gY)"/></svg><svg class="b" style="left:528.00px;top:353.06px;z-index:99" width="36" height="36" viewBox="-2.5 -2.5 36 36"><circle cx="15.5" cy="15.5" r="17" fill="#fff"/><circle cx="15.5" cy="15.5" r="15.5" fill="#9dcff8"/><path d="M15.5 8.7l2.2 4.6 5.1.7-3.7 3.6.9 5-4.5-2.4-4.5 2.4.9-5-3.7-3.6 5.1-.7z" fill="url(#gB)" stroke="url(#gB)" stroke-width="1.2" stroke-linejoin="round"/></svg><svg class="b" style="left:564.50px;top:353.06px;z-index:98" width="36" height="36" viewBox="-2.5 -2.5 36 36"><circle cx="15.5" cy="15.5" r="17" fill="#fff"/><circle cx="15.5" cy="15.5" r="15.5" fill="#d8a9f5"/><polygon points="24.20,15.60 22.92,17.22 23.37,19.24 21.51,20.15 21.04,22.17 18.97,22.18 17.67,23.79 15.80,22.90 13.93,23.79 12.63,22.18 10.56,22.17 10.09,20.15 8.23,19.24 8.68,17.22 7.40,15.60 8.68,13.98 8.23,11.96 10.09,11.05 10.56,9.03 12.63,9.02 13.93,7.41 15.80,8.30 17.67,7.41 18.97,9.02 21.04,9.03 21.51,11.05 23.37,11.96 22.92,13.98" fill="url(#gP)" stroke="url(#gP)" stroke-width="0.6" stroke-linejoin="round"/><path d="M13.3 15.8l1.8 1.8 3.4-3.4" fill="none" stroke="#f7e6ff" stroke-width="1.4" stroke-linecap="round" stroke-linejoin="round"/></svg><svg class="b" style="left:601.00px;top:353.06px;z-index:97" width="36" height="36" viewBox="-2.5 -2.5 36 36"><circle cx="15.5" cy="15.5" r="17" fill="#fff"/><circle cx="15.5" cy="15.5" r="15.5" fill="#a7e7a7"/><path d="M23 8.1c-6.8-.2-12.3 2.8-12.3 8.3 0 1.8.8 3 2.2 3.6 6.2-.6 9.8-5.5 10.1-11.9z" fill="url(#gG)"/><path d="M10 24.1c.7-4.3 3.7-8.2 8.7-11.2" fill="none" stroke="url(#gG)" stroke-width="1.4" stroke-linecap="round"/></svg><svg class="b" style="left:637.50px;top:353.06px;z-index:96" width="36" height="36" viewBox="-2.5 -2.5 36 36"><circle cx="15.5" cy="15.5" r="17" fill="#fff"/><circle cx="15.5" cy="15.5" r="15.5" fill="#b1aef8"/><rect x="7.8" y="6.9" width="16.9" height="16.9" rx="1.5" fill="#8790f6"/><path d="M18.3 8.3l4.6 4.6-2.2 2.2a1.7 1.7 0 0 1-2.4 2.4l-4.9 4.9-4.6-4.6 2.2-2.2a1.7 1.7 0 0 1 2.4-2.4z" fill="#5f4fe0" opacity="0.9"/></svg><svg class="b" style="left:674.00px;top:353.06px;z-index:95" width="36" height="36" viewBox="-2.5 -2.5 36 36"><circle cx="15.5" cy="15.5" r="17" fill="#fff"/><circle cx="15.5" cy="15.5" r="15.5" fill="#fdd66c"/><path d="M10.8 7.6h6.7l6 5.4v8.8a1.3 1.3 0 0 1-1.3 1.3H10.8a1.3 1.3 0 0 1-1.3-1.3V8.9a1.3 1.3 0 0 1 1.3-1.3z" fill="url(#gY)"/><path d="M17.5 7.6l6 5.4h-4.7a1.3 1.3 0 0 1-1.3-1.3z" fill="#ffd080" opacity="0.7"/><path d="M16.5 14.6v5.4M13.8 17.3h5.4" stroke="#ffe4b0" stroke-width="1.3"/></svg><svg class="b" style="left:710.50px;top:353.06px;z-index:94" width="36" height="36" viewBox="-2.5 -2.5 36 36"><circle cx="15.5" cy="15.5" r="17" fill="#fff"/><circle cx="15.5" cy="15.5" r="15.5" fill="#9dcff8"/><path d="M9.8 7.4h5.7l4.8 4.6v9.9a1.3 1.3 0 0 1-1.3 1.3H9.8a1.3 1.3 0 0 1-1.3-1.3V8.7a1.3 1.3 0 0 1 1.3-1.3z" fill="url(#gB)"/><path d="M15.5 7.4l4.8 4.6h-3.5a1.3 1.3 0 0 1-1.3-1.3z" fill="#8aa6f5" opacity="0.6"/><path d="M10.6 20.2c.6-1.6 1-2.4 1.4-2.4s.2 2 .7 2 .8-1 1.2-1 .5.9 1 .9" fill="none" stroke="#d0dcff" stroke-width="0.8"/><rect x="21.6" y="9" width="1.9" height="11.7" rx="0.9" fill="url(#gB)"/></svg>
<div class="a num" style="left:43.8px;top:403.03px">5</div>
<div class="a num" style="left:279.5px;top:403.03px">3</div>
<div class="a num" style="left:340.8px;top:403.03px">64 159</div>
<div class="a num" style="left:433px;top:403.03px">12</div>
<svg class="b" style="left:455.25px;top:408.24px" width="8" height="5" viewBox="0 0 8 5"><path d="M1 1l2.75 2.75 2.75-2.75" fill="none" stroke="#1b1b22" stroke-width="1.25" stroke-linecap="round" stroke-linejoin="round"/></svg>
<div class="av" style="left:84px;top:398.38px">RA</div>
<div class="a nm" style="left:115.8px;top:400.03px;line-height:11.3px;letter-spacing:-0.17px">Rashid Khalfan Mubarak Khalfan<br>Almheiri</div>
<svg class="b" style="left:491.50px;top:392.63px;z-index:100" width="36" height="36" viewBox="-2.5 -2.5 36 36"><circle cx="15.5" cy="15.5" r="17" fill="#fff"/><circle cx="15.5" cy="15.5" r="15.5" fill="#b1aef8"/><path d="M18 9.8a3.6 3.6 0 0 1 0 6.6M19.5 17.7c2.2.5 3.6 2 3.6 4.6" fill="none" stroke="#8f8cf7" stroke-width="1.6" stroke-linecap="round"/><circle cx="14" cy="13" r="3.8" fill="url(#gL)"/><rect x="7.4" y="17.6" width="12.2" height="5.6" rx="2.8" fill="url(#gL)"/></svg><svg class="b" style="left:528.00px;top:392.63px;z-index:99" width="36" height="36" viewBox="-2.5 -2.5 36 36"><circle cx="15.5" cy="15.5" r="17" fill="#fff"/><circle cx="15.5" cy="15.5" r="15.5" fill="#8fe8d8"/><path d="M9.3 10.2c.9-1 1.9-1 2.6 0l1.6 2.3c.4.7.3 1.4-.2 1.9l-.9.9c.8 1.7 2.2 3.1 3.9 3.9l.9-.9c.5-.5 1.3-.6 1.9-.2l2.3 1.6c.9.7.9 1.6 0 2.6-1.3 1.4-3.1 1.7-5 .8-3.2-1.7-5.4-3.9-7-7-.9-1.9-.6-3.6.9-4.9z" fill="url(#gT)"/><path d="M17.2 8.6a5.7 5.7 0 0 1 5.3 5.3M17.2 11.1a3.2 3.2 0 0 1 2.8 2.8" fill="none" stroke="url(#gT)" stroke-width="1.1" stroke-linecap="round"/></svg><svg class="b" style="left:564.50px;top:392.63px;z-index:98" width="36" height="36" viewBox="-2.5 -2.5 36 36"><circle cx="15.5" cy="15.5" r="17" fill="#fff"/><circle cx="15.5" cy="15.5" r="15.5" fill="#a7e7a7"/><path d="M9 7.5h7.6a1.5 1.5 0 0 1 1.5 1.5v4a1.5 1.5 0 0 1-1.5 1.5h-6l-1.5 1.8v-1.8a1.5 1.5 0 0 1-1.4-1.5V9A1.5 1.5 0 0 1 9 7.5z" fill="#74c882"/><path d="M14.4 12.6h8.7a1.5 1.5 0 0 1 1.5 1.5v6.9a1.5 1.5 0 0 1-1.5 1.5h-.5v1.9l-1.9-1.9h-6.3a1.5 1.5 0 0 1-1.5-1.5v-6.9a1.5 1.5 0 0 1 1.5-1.5z" fill="url(#gG)"/></svg><svg class="b" style="left:601.00px;top:392.63px;z-index:97" width="36" height="36" viewBox="-2.5 -2.5 36 36"><circle cx="15.5" cy="15.5" r="17" fill="#fff"/><circle cx="15.5" cy="15.5" r="15.5" fill="#b1aef8"/><path d="M16 9.2l6.6 3.3v7.5l-6.6 3.3-6.6-3.3v-7.5z" fill="url(#gL)"/><path d="M16 9.2l6.6 3.3-6.6 3.3-6.6-3.3z" fill="#8f8cf7" opacity="0.6"/></svg><svg class="b" style="left:637.50px;top:392.63px;z-index:96" width="36" height="36" viewBox="-2.5 -2.5 36 36"><circle cx="15.5" cy="15.5" r="17" fill="#fff"/><circle cx="15.5" cy="15.5" r="15.5" fill="#d8a9f5"/><circle cx="16" cy="15.9" r="8.5" fill="url(#gP)"/><path d="M15.6 11v5l3.6 2" fill="none" stroke="#f3ddff" stroke-width="1.2" stroke-linecap="round" stroke-linejoin="round"/></svg><svg class="b" style="left:674.00px;top:392.63px;z-index:95" width="36" height="36" viewBox="-2.5 -2.5 36 36"><circle cx="15.5" cy="15.5" r="17" fill="#fff"/><circle cx="15.5" cy="15.5" r="15.5" fill="#b1aef8"/><circle cx="16" cy="15.6" r="7.2" fill="url(#gL)"/><path d="M14.2 10.6l4.2 9.6" stroke="#8f8cf7" stroke-width="0.9" stroke-linecap="round"/></svg>
<div class="a num" style="left:43.8px;top:442.60px">6</div>
<div class="a num" style="left:279.5px;top:442.60px">5</div>
<div class="a num" style="left:340.8px;top:442.60px">56 400</div>
<div class="a num" style="left:433px;top:442.60px">45</div>
<svg class="b" style="left:455.25px;top:447.81px" width="8" height="5" viewBox="0 0 8 5"><path d="M1 1l2.75 2.75 2.75-2.75" fill="none" stroke="#1b1b22" stroke-width="1.25" stroke-linecap="round" stroke-linejoin="round"/></svg>
<svg class="b" style="left:84px;top:437.95px" width="24.5" height="24.5" viewBox="0 0 24.5 24.5"><clipPath id="c6"><circle cx="12.25" cy="12.25" r="12.25"/></clipPath><g clip-path="url(#c6)"><defs><linearGradient id="gr" x1="0" x2="1"><stop offset="0" stop-color="#dfe9ea"/><stop offset="0.35" stop-color="#6b5548"/><stop offset="1" stop-color="#a27048"/></linearGradient></defs><circle cx="12.25" cy="12.25" r="12.25" fill="url(#gr)"/><path d="M3 24c1.5-2.5 4.5-3.5 9.25-3.5s7.75 1 9.25 3.5z" fill="#1e1e20"/><ellipse cx="11.9" cy="11" rx="5" ry="6.5" fill="#caa28d"/><path d="M6.6 12c.2 5.5 2.5 9 5.3 9s5.1-3.5 5.3-9c-1 2-2.7 3-5.3 3s-4.3-1-5.3-3z" fill="#3e2c22"/><path d="M5.8 11c-.5-6 2.3-9.5 6.1-9.5s6.6 3.5 6.1 9.5c-.4-3-2-4.8-6.1-4.8s-5.7 1.8-6.1 4.8z" fill="#36261d"/></g></svg>
<div class="a nm" style="left:115.8px;top:445.20px;letter-spacing:-0.22px">Romario Javier Fajardo Amaya</div>
<svg class="b" style="left:491.50px;top:432.20px;z-index:100" width="36" height="36" viewBox="-2.5 -2.5 36 36"><circle cx="15.5" cy="15.5" r="17" fill="#fff"/><circle cx="15.5" cy="15.5" r="15.5" fill="#9dcff8"/><text x="15.6" y="19" text-anchor="middle" font-family="Liberation Serif" font-weight="bold" font-size="9.2" fill="#2440b0" stroke="#2440b0" stroke-width="0.5" letter-spacing="0.2">ISO</text></svg><svg class="b" style="left:528.00px;top:432.20px;z-index:99" width="36" height="36" viewBox="-2.5 -2.5 36 36"><circle cx="15.5" cy="15.5" r="17" fill="#fff"/><circle cx="15.5" cy="15.5" r="15.5" fill="#b1aef8"/><path d="M10.5 6.8h7.2l5.9 5.3v9.9a1.3 1.3 0 0 1-1.3 1.3H10.5A1.4 1.4 0 0 1 9.1 22V8.2a1.4 1.4 0 0 1 1.4-1.4z" fill="url(#gL)"/><path d="M17.7 6.8l5.9 5.3h-4.4a1.5 1.5 0 0 1-1.5-1.5z" fill="#8f8cf7" opacity="0.55"/><path d="M13.8 16.8l1.8 1.8 3.4-3.6" fill="none" stroke="#fff" stroke-width="1.3" stroke-linecap="round" stroke-linejoin="round"/></svg><svg class="b" style="left:564.50px;top:432.20px;z-index:98" width="36" height="36" viewBox="-2.5 -2.5 36 36"><circle cx="15.5" cy="15.5" r="17" fill="#fff"/><circle cx="15.5" cy="15.5" r="15.5" fill="#f59e9e"/><rect x="8.2" y="7.5" width="15.8" height="10.2" rx="1.1" fill="url(#gR)"/><path d="M9.2 12.3l2-2.2 1.8 3 2-3.4 1.7 3.4 1.7-2.6 2.2 3" fill="none" stroke="#ffe0e0" stroke-width="0.9"/><path d="M17.7 16.9l4.7 6.1h-9.4z" fill="url(#gR)" stroke="#f59e9e" stroke-width="0.7" stroke-linejoin="round"/><path d="M17.7 19v1.9" stroke="#ffd0d0" stroke-width="0.9"/></svg><svg class="b" style="left:601.00px;top:432.20px;z-index:97" width="36" height="36" viewBox="-2.5 -2.5 36 36"><circle cx="15.5" cy="15.5" r="17" fill="#fff"/><circle cx="15.5" cy="15.5" r="15.5" fill="#fdd66c"/><text x="15.5" y="18.2" text-anchor="middle" font-family="Liberation Sans" font-weight="bold" font-size="6.5" fill="#e85e28" stroke="#e85e28" stroke-width="0.15" letter-spacing="-0.15">SCORM</text></svg><svg class="b" style="left:637.50px;top:432.20px;z-index:96" width="36" height="36" viewBox="-2.5 -2.5 36 36"><circle cx="15.5" cy="15.5" r="17" fill="#fff"/><circle cx="15.5" cy="15.5" r="15.5" fill="#f8b8f1"/><path d="M9.3 8.1h12.9a1.3 1.3 0 0 1 1.3 1.3v8.9a1.3 1.3 0 0 1-1.3 1.3H14l-3.6 3.9v-3.9h-1.1A1.3 1.3 0 0 1 8 18.3V9.4a1.3 1.3 0 0 1 1.3-1.3z" fill="url(#gK)"/><path d="M11 11.7h9.3M11 13.7h3.6M11 15.7h6.6" stroke="#ffe0e6" stroke-width="1.1"/></svg>
<div class="a num" style="left:43.8px;top:482.17px">7</div>
<div class="a num" style="left:279.5px;top:482.17px">1</div>
<div class="a num" style="left:340.8px;top:482.17px">43 418</div>
<div class="a num" style="left:433px;top:482.17px">59</div>
<svg class="b" style="left:455.25px;top:487.38px" width="8" height="5" viewBox="0 0 8 5"><path d="M1 1l2.75 2.75 2.75-2.75" fill="none" stroke="#1b1b22" stroke-width="1.25" stroke-linecap="round" stroke-linejoin="round"/></svg>
<svg class="b" style="left:84px;top:477.52px" width="24.5" height="24.5" viewBox="0 0 24.5 24.5"><clipPath id="c7"><circle cx="12.25" cy="12.25" r="12.25"/></clipPath><g clip-path="url(#c7)"><circle cx="12.25" cy="12.25" r="12.25" fill="#b9b9bd"/><rect x="0" y="0" width="24.5" height="5.4" fill="#2e2e30"/><rect x="0" y="5.4" width="24.5" height="3.2" fill="#e6e6e8"/><path d="M0 9h5l3 6H0zM24.5 9h-5l-3 6h8.5z" fill="#6a6a6e"/><path d="M3 8.5l6 4v3l-7-4zM21.5 8.5l-6 4v3l7-4z" fill="#dadadc"/><path d="M8.4 7c.3-3 1.7-4 4-4s3.9 1 4.2 4l.5 18H8z" fill="#6c5a5c"/><path d="M11 11h3v14h-3z" fill="#dccdd0"/><ellipse cx="12.5" cy="7.3" rx="2.4" ry="3.2" fill="#eddcd8"/></g></svg>
<div class="a nm" style="left:115.8px;top:479.17px;line-height:11.3px;letter-spacing:-0.05px">Zohaib Adil Bhatti Muhammad<br>Aslam Bhatti</div>
<svg class="b" style="left:491.50px;top:471.77px;z-index:100" width="36" height="36" viewBox="-2.5 -2.5 36 36"><circle cx="15.5" cy="15.5" r="17" fill="#fff"/><circle cx="15.5" cy="15.5" r="15.5" fill="#a7e7a7"/><path d="M23 8.1c-6.8-.2-12.3 2.8-12.3 8.3 0 1.8.8 3 2.2 3.6 6.2-.6 9.8-5.5 10.1-11.9z" fill="url(#gG)"/><path d="M10 24.1c.7-4.3 3.7-8.2 8.7-11.2" fill="none" stroke="url(#gG)" stroke-width="1.4" stroke-linecap="round"/></svg><svg class="b" style="left:528.00px;top:471.77px;z-index:99" width="36" height="36" viewBox="-2.5 -2.5 36 36"><circle cx="15.5" cy="15.5" r="17" fill="#fff"/><circle cx="15.5" cy="15.5" r="15.5" fill="#d8a9f5"/><rect x="8.5" y="8.6" width="15" height="11" rx="1.3" fill="url(#gP)"/><rect x="11" y="22" width="9.5" height="1.5" rx="0.75" fill="url(#gP)"/><path d="M14.3 14.3v-1.5a1.5 1.5 0 0 1 3 0v1.5z" fill="#f3dcff"/><rect x="12.8" y="14.4" width="6" height="1.9" rx="0.5" fill="#f3dcff"/></svg><svg class="b" style="left:564.50px;top:471.77px;z-index:98" width="36" height="36" viewBox="-2.5 -2.5 36 36"><circle cx="15.5" cy="15.5" r="17" fill="#fff"/><circle cx="15.5" cy="15.5" r="15.5" fill="#fdd66c"/><path d="M15.8 8.2v14.6M8.7 10h14.2M12.2 23h7.2" stroke="url(#gY)" stroke-width="1.2"/><path d="M10.5 10.3l-2.6 6.2M10.5 10.3l2.6 6.2M20.7 10.3l-2.6 6.2M20.7 10.3l2.6 6.2" stroke="url(#gY)" stroke-width="0.8"/><path d="M7.6 16.5h5.8a2.9 2.4 0 0 1-5.8 0zM17.8 16.5h5.8a2.9 2.4 0 0 1-5.8 0z" fill="url(#gY)"/></svg><svg class="b" style="left:601.00px;top:471.77px;z-index:97" width="36" height="36" viewBox="-2.5 -2.5 36 36"><circle cx="15.5" cy="15.5" r="17" fill="#fff"/><circle cx="15.5" cy="15.5" r="15.5" fill="#f8b65f"/><path d="M15.7 7.4a5.8 5.8 0 0 1 3.6 10.3v.6h-7.2v-.6A5.8 5.8 0 0 1 15.7 7.4z" fill="url(#gO)"/><path d="M12.3 19h6.8l-1 2.3-2.4 2.3-2.4-2.3z" fill="url(#gO)"/><path d="M13.4 12.4l1.1 1.5 1.2-1.5 1.2 1.5 1.1-1.5" fill="none" stroke="#ffd3b0" stroke-width="0.9"/></svg><svg class="b" style="left:637.50px;top:471.77px;z-index:96" width="36" height="36" viewBox="-2.5 -2.5 36 36"><circle cx="15.5" cy="15.5" r="17" fill="#fff"/><circle cx="15.5" cy="15.5" r="15.5" fill="#b1aef8"/><path d="M16 7.8l7.3 3.9-7.3 3.9-7.3-3.9z" fill="#8f8cf7"/><path d="M11 14v5.5c1.4 1.6 3.1 2.4 5 2.4s3.6-.8 5-2.4V14l-5 2.7z" fill="url(#gL)"/><path d="M23.2 12v5" stroke="url(#gL)" stroke-width="0.9"/><circle cx="23.3" cy="18" r="1.1" fill="url(#gL)"/></svg>
<div class="a" style="left:479.5px;top:314.3px;width:109.3px;height:19px;background:#2a2e40;border-radius:3px;z-index:200;color:#fff;font-size:8px;line-height:19.6px;padding-left:7.7px;letter-spacing:-0.17px">Environmental responsibility</div>
<svg class="b" style="left:530.5px;top:310.6px;z-index:200" width="8" height="4.5" viewBox="0 0 8 4.5"><path d="M0 4.5L4 0 8 4.5z" fill="#2a2e40"/></svg>
<svg class="b" style="left:542px;top:299px;z-index:300" width="10" height="13" viewBox="0 0 10 13"><path d="M1 1v9.5l2.3-2.2 1.6 3.6 1.6-.7-1.6-3.5h3.2z" fill="#111" stroke="#fff" stroke-width="0.8"/></svg>
</body></html>
